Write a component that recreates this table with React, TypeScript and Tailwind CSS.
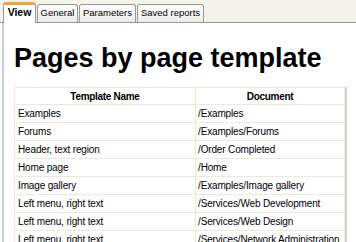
const rows: [string, string][] = [
  ["Examples", "/Examples"],
  ["Forums", "/Examples/Forums"],
  ["Header, text region", "/Order Completed"],
  ["Home page", "/Home"],
  ["Image gallery", "/Examples/Image gallery"],
  ["Left menu, right text", "/Services/Web Development"],
  ["Left menu, right text", "/Services/Web Design"],
  ["Left menu, right text", "/Services/Network Administration"],
];

const tabs: [string, string][] = [
  ["General", "w-[41px]"],
  ["Parameters", "w-[57px]"],
  ["Saved reports", "w-[67px]"],
];

export default function App() {
  return (
    <div className="h-[242px] w-[356px] overflow-hidden bg-white font-['Liberation_Sans',Arial,sans-serif] text-black">
      {/* tab strip */}
      <div className="flex h-[23px] items-end gap-[1px] border-b border-[#919b9c] bg-[#f5f2ea] pl-[3px] text-[9.5px]">
        <div className="relative -mb-px flex h-[21px] w-[33px] items-center justify-center rounded-t-[3px] border-x border-t-[3px] border-x-[#919b9c] border-t-[#f1a33c] bg-white pb-[2px] text-[10.5px] font-bold">
          View
        </div>
        {tabs.map(([t, w]) => (
          <div
            key={t}
            className={`flex h-[18px] items-center justify-center rounded-t-[3px] border-x border-t border-[#919b9c] bg-gradient-to-b from-white to-[#ecebe6] ${w}`}
          >
            {t}
          </div>
        ))}
      </div>

      {/* panel */}
      <div className="ml-[2px] h-[219px] border-l-2 border-[#c9d0d4] pl-[10px] pt-[20px]">
        <h1 className="text-[27px] font-bold leading-[30px]">Pages by page template</h1>
        <div className="mt-[14px] w-[333px] border-r-2 border-[#d4d2cc]">
          <table className="w-[331px] table-fixed border-collapse text-[10px] tracking-[-0.15px]">
            <thead>
              <tr className="h-[17px]">
                <th className="w-[181px] border border-[#ece9d8] text-center font-bold tracking-[-0.3px]">Template Name</th>
                <th className="border border-[#ece9d8] text-center font-bold tracking-[-0.3px]">Document</th>
              </tr>
            </thead>
            <tbody>
              {rows.map(([a, b], i) => (
                <tr key={i} className="h-[18px]">
                  <td className="border border-[#ece9d8] px-[3px]">{a}</td>
                  <td className="whitespace-nowrap border border-[#ece9d8] px-[2px]">{b}</td>
                </tr>
              ))}
            </tbody>
          </table>
        </div>
      </div>
    </div>
  );
}
